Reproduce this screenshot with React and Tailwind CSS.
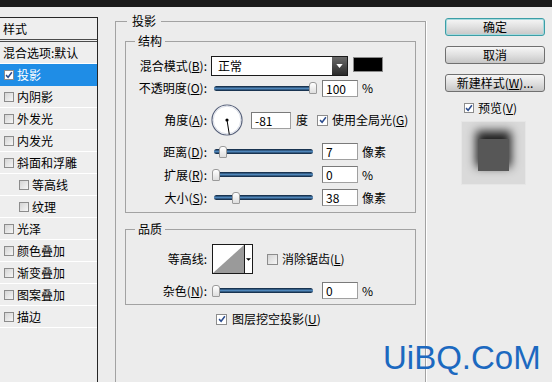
import React from "react";

const font = "font-['Noto_Sans_CJK_SC','Noto_Sans',sans-serif]";

function Box({ checked, size = "w-[11px] h-[11px]", white }) {
  return (
    <span
      className={`inline-flex ${size} shrink-0 items-center justify-center border border-[#8c8c8c] ${
        checked || white ? "bg-white" : "bg-[linear-gradient(135deg,#d4d4d4,#f6f6f6)]"
      }`}
    >
      {checked && (
        <svg viewBox="0 0 10 10" className="w-[8px] h-[8px]">
          <path d="M1.3 5.2 L3.9 7.8 L8.6 1.6" stroke="#2b4c8e" strokeWidth="1.9" fill="none" />
        </svg>
      )}
    </span>
  );
}

function Slider({ pos }) {
  return (
    <div className="relative w-[105px] h-[12px] flex items-center">
      <div className="ml-[2px] mr-[4px] flex-1 h-[5px] rounded-full bg-[linear-gradient(to_bottom,#0b1f36,#4f86ba_50%,#0b1f36)]" />
      {/* thumb sits on the track */}
      <div
        className="absolute top-0 w-[8px] h-[12px] rounded-t-[3px] rounded-b-[1px] border border-[#9a9a9a] bg-[linear-gradient(to_bottom,#ffffff,#dedede)]"
        style={{ left: pos }}
      />
    </div>
  );
}

function Field({ v, w = "w-[36px]" }) {
  return (
    <div className={`${w} h-[17px] bg-white border border-[#a0a0a0] border-t-[#7a7a7a] border-l-[#7a7a7a] pl-[3px] text-[12px] leading-[15px]`}>
      {v}
    </div>
  );
}

function Label({ children }) {
  return <div className="w-[81px] shrink-0 text-right leading-[14px]">{children}</div>;
}

const listItems = [
  { t: "投影", on: true },
  { t: "内阴影" },
  { t: "外发光" },
  { t: "内发光" },
  { t: "斜面和浮雕" },
  { t: "等高线", sub: true },
  { t: "纹理", sub: true },
  { t: "光泽" },
  { t: "颜色叠加" },
  { t: "渐变叠加" },
  { t: "图案叠加" },
  { t: "描边" },
];

export default function App() {
  return (
    <div className={`relative w-[552px] h-[382px] overflow-hidden bg-[#ececec] text-[12px] text-black ${font}`}>
      <div className="h-[7px] bg-[#1c1c1c]" />

      <div className="flex items-start">
        {/* 样式列表 */}
        <div className="w-[98px] h-[380px] mt-[10px] border-t border-r border-[#262626] bg-[#eeeeee]">
          <div className="h-[21px] pl-[3px] leading-[21px]">样式</div>
          <div className="h-[3px] border-t border-b border-[#4a4a4a]" />
          <div className="h-[22px] pl-[3px] leading-[21px] border-b border-white">混合选项:默认</div>
          {listItems.map((it) => (
            <div
              key={it.t}
              className={`h-[22px] flex items-center gap-[3px] border-b ${
                it.on ? "bg-[#1f8de6] text-white border-[#1f8de6]" : "border-white"
              } ${it.sub ? "pl-[19px]" : "pl-[4px]"}`}
            >
              <Box checked={it.on} size="w-[10px] h-[10px]" />
              <span className="leading-none">{it.t}</span>
            </div>
          ))}
        </div>

        {/* 投影 */}
        <fieldset className="ml-[17px] mt-[6px] w-[311px] h-[420px] border border-[#a2a2a2] shadow-[1px_0_0_#ffffff] px-[9px]">
          <legend className="ml-[2px] px-[5px] h-[16px] leading-[16px]">投影</legend>

          <fieldset className="mt-[4px] border border-[#a2a2a2] pb-[6px]">
            <legend className="ml-[9px] px-[3px] h-[16px] leading-[16px]">结构</legend>

            <div className="mt-[7px] flex items-start h-[20px]">
              <div className="mt-[3px]">
                <Label>
                  混合模式(<u>B</u>):
                </Label>
              </div>
              <div className="ml-[4px] w-[137px] h-[20px] flex border border-[#1a1a1a] bg-white">
                <div className="flex-1 pl-[6px] leading-[18px]">正常</div>
                <div className="w-[15px] flex items-center justify-center bg-[linear-gradient(to_bottom,#6a6a6a,#2a2a2a)]">
                  <svg viewBox="0 0 8 5" className="w-[7px] h-[4px]">
                    <path d="M0 0 H8 L4 5 Z" fill="#fff" />
                  </svg>
                </div>
              </div>
              <div className="ml-[5px] mt-[1px] w-[30px] h-[15px] bg-black border border-[#8a8a8a]" />
            </div>

            <div className="mt-[4px] flex items-center h-[16px]">
              <Label>
                不透明度(<u>O</u>):
              </Label>
              <div className="ml-[5px]">
                <Slider pos={97} />
              </div>
              <div className="ml-[5px]">
                <Field v="100" />
              </div>
              <span className="ml-[4px]">%</span>
            </div>

            <div className="mt-[8px] flex items-center h-[32px]">
              <Label>
                角度(<u>A</u>):
              </Label>
              <svg viewBox="0 0 32 32" className="ml-[4px] w-[32px] h-[32px]">
                <circle cx="16" cy="16" r="15" fill="#ffffff" stroke="#56607a" strokeWidth="1.2" />
                <circle cx="16" cy="16" r="13.8" fill="none" stroke="#d9dde6" strokeWidth="1" />
                <line x1="16" y1="16" x2="18.3" y2="30.5" stroke="#000" strokeWidth="1" />
                <circle cx="16" cy="16" r="1.6" fill="#000" />
              </svg>
              <div className="ml-[8px]">
                <Field v="-81" w="w-[40px]" />
              </div>
              <span className="ml-[5px]">度</span>
              <div className="ml-[9px] flex items-center">
                <Box checked />
              </div>
              <span className="ml-[4px]">
                使用全局光(<u>G</u>)
              </span>
            </div>

            <div className="mt-[7px] flex items-center h-[17px]">
              <Label>
                距离(<u>D</u>):
              </Label>
              <div className="ml-[5px]">
                <Slider pos={7} />
              </div>
              <div className="ml-[5px]">
                <Field v="7" />
              </div>
              <span className="ml-[4px]">像素</span>
            </div>

            <div className="mt-[6px] flex items-center h-[17px]">
              <Label>
                扩展(<u>R</u>):
              </Label>
              <div className="ml-[5px]">
                <Slider pos={0} />
              </div>
              <div className="ml-[5px]">
                <Field v="0" />
              </div>
              <span className="ml-[4px]">%</span>
            </div>

            <div className="mt-[6px] flex items-center h-[17px]">
              <Label>
                大小(<u>S</u>):
              </Label>
              <div className="ml-[5px]">
                <Slider pos={20} />
              </div>
              <div className="ml-[5px]">
                <Field v="38" />
              </div>
              <span className="ml-[4px]">像素</span>
            </div>
          </fieldset>

          <fieldset className="mt-[8px] border border-[#a2a2a2] pb-[5px]">
            <legend className="ml-[9px] px-[3px] h-[16px] leading-[16px]">品质</legend>

            <div className="mt-[7px] flex items-center h-[30px]">
              <Label>等高线:</Label>
              <div className="ml-[5px] w-[41px] h-[30px] flex border border-[#1a1a1a] bg-white">
                <svg viewBox="0 0 31 28" className="w-[31px] h-[28px]" preserveAspectRatio="none">
                  <path d="M0 28 L31 0 V28 Z" fill="#9a9a9a" />
                </svg>
                <div className="flex-1 border-l border-[#1a1a1a] flex items-center justify-center">
                  <svg viewBox="0 0 6 3" className="w-[5px] h-[3px]">
                    <path d="M0 0 H6 L3 3 Z" fill="#000" />
                  </svg>
                </div>
              </div>
              <div className="ml-[14px] flex items-center">
                <Box />
              </div>
              <span className="ml-[4px]">
                消除锯齿(<u>L</u>)
              </span>
            </div>

            <div className="mt-[8px] flex items-center h-[17px]">
              <Label>
                杂色(<u>N</u>):
              </Label>
              <div className="ml-[5px]">
                <Slider pos={0} />
              </div>
              <div className="ml-[5px]">
                <Field v="0" />
              </div>
              <span className="ml-[4px]">%</span>
            </div>
          </fieldset>

          <div className="mt-[8px] ml-[91px] flex items-center h-[12px]">
            <Box checked />
            <span className="ml-[5px]">
              图层挖空投影(<u>U</u>)
            </span>
          </div>
        </fieldset>

        {/* 按钮 */}
        <div className="ml-[19px] mt-[11px] w-[100px] flex flex-col">
          <button className="h-[18px] rounded-[3px] border border-[#3c9ea6] shadow-[inset_0_0_0_1px_#a6dade] bg-[linear-gradient(to_bottom,#f6f6f6,#e0e0e0_50%,#c6c6c6)] leading-none">
            确定
          </button>
          <button className="mt-[10px] h-[18px] rounded-[3px] border border-[#707070] bg-[linear-gradient(to_bottom,#f6f6f6,#e0e0e0_50%,#c6c6c6)] leading-none">
            取消
          </button>
          <button className="mt-[10px] h-[18px] rounded-[3px] border border-[#707070] bg-[linear-gradient(to_bottom,#f6f6f6,#e0e0e0_50%,#c6c6c6)] leading-none">
            新建样式(<u>W</u>)...
          </button>
          <div className="mt-[10px] h-[12px] ml-[19px] flex items-center">
            <Box checked size="w-[10px] h-[10px]" />
            <span className="ml-[4px]">
              预览(<u>V</u>)
            </span>
          </div>
          <div className="mt-[7px] ml-[16px] w-[65px] h-[64px] bg-[#dadada] border border-[#e6e6e6] flex justify-center pt-[17px]">
            <div className="w-[31px] h-[32px] bg-[#575757] shadow-[0_-6px_9px_2px_rgba(0,0,0,0.85)]" />
          </div>
        </div>
      </div>

      {/* 水印 */}
      <div className="absolute left-[383px] top-[341px] text-[33px] leading-none text-[#1c69c0] font-['Liberation_Sans',sans-serif]">
        UiBQ.CoM
      </div>
    </div>
  );
}
